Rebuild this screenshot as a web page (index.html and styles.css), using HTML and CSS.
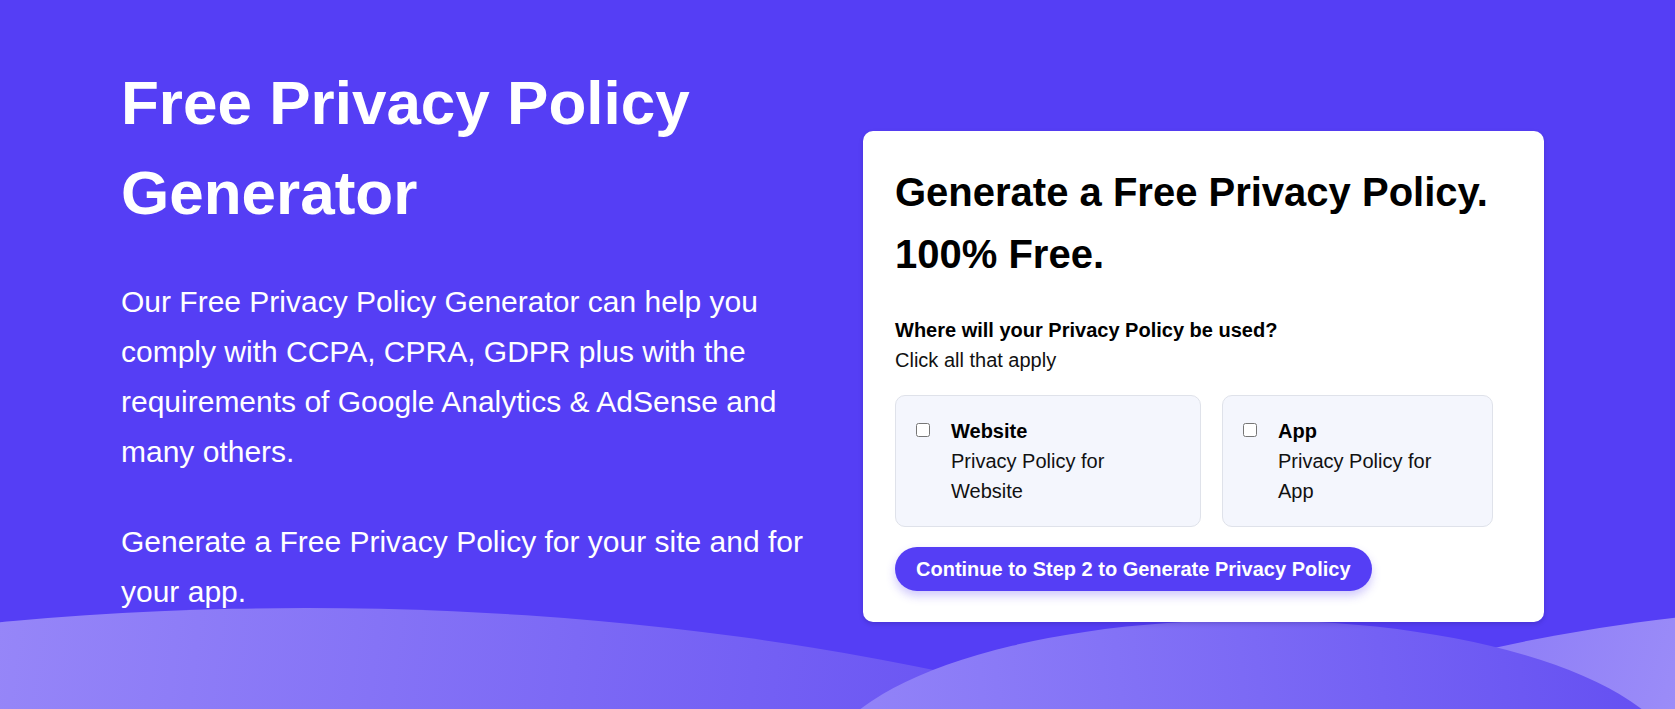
FILE: index.html
```html
<!DOCTYPE html>
<html lang="en">
<head>
<meta charset="utf-8">
<title>Free Privacy Policy Generator</title>
<link rel="stylesheet" href="styles.css">
</head>
<body>
<section class="hero">
  <svg class="waves" viewBox="0 0 1675 709" preserveAspectRatio="none" aria-hidden="true">
    <defs>
      <linearGradient id="gLeft" gradientUnits="userSpaceOnUse" x1="0" y1="600" x2="950" y2="709">
        <stop offset="0" stop-color="#9686f8"/>
        <stop offset="1" stop-color="#6b56f3"/>
      </linearGradient>
      <linearGradient id="gMid" gradientUnits="userSpaceOnUse" x1="860" y1="709" x2="1640" y2="640">
        <stop offset="0" stop-color="#9283f8"/>
        <stop offset="1" stop-color="#6550f2"/>
      </linearGradient>
      <linearGradient id="gRight" gradientUnits="userSpaceOnUse" x1="1490" y1="650" x2="1675" y2="709">
        <stop offset="0" stop-color="#8e7ef7"/>
        <stop offset="1" stop-color="#9b8cf8"/>
      </linearGradient>
    </defs>
    <ellipse cx="306" cy="1283" rx="1500" ry="675" fill="url(#gLeft)"/>
    <ellipse cx="1900" cy="1005" rx="900" ry="400" fill="url(#gRight)"/>
    <ellipse cx="1251" cy="773" rx="430" ry="153" fill="url(#gMid)"/>
  </svg>
  <div class="hero-inner">
    <div class="intro">
      <h1 class="intro-title">Free Privacy Policy Generator</h1>
      <p class="intro-text">Our Free Privacy Policy Generator can help you comply with CCPA, CPRA, GDPR plus with the requirements of Google Analytics &amp; AdSense and many others.</p>
      <p class="intro-text">Generate a Free Privacy Policy for your site and for your app.</p>
    </div>
    <div class="card">
      <h2 class="card-title">Generate a Free Privacy Policy. 100% Free.</h2>
      <p class="question">Where will your Privacy Policy be used?</p>
      <p class="hint">Click all that apply</p>
      <div class="options">
        <label class="option">
          <input class="option-check" type="checkbox">
          <span class="option-text">
            <strong class="option-name">Website</strong>
            <span class="option-desc">Privacy Policy for Website</span>
          </span>
        </label>
        <label class="option">
          <input class="option-check" type="checkbox">
          <span class="option-text">
            <strong class="option-name">App</strong>
            <span class="option-desc">Privacy Policy for App</span>
          </span>
        </label>
      </div>
      <button class="cta" type="button">Continue to Step 2 to Generate Privacy Policy</button>
    </div>
  </div>
</section>
</body>
</html>
```

FILE: styles.css
```css
* {
  box-sizing: border-box;
}

html, body {
  margin: 0;
  padding: 0;
}

body {
  font-family: "Liberation Sans", Arial, sans-serif;
  background: #553ef5;
}

.hero {
  position: relative;
  height: 709px;
  overflow: hidden;
  background: #553ef5;
}

.waves {
  position: absolute;
  left: 0;
  top: 0;
  width: 100%;
  height: 100%;
  z-index: 0;
}

.hero-inner {
  position: relative;
  z-index: 1;
  display: flex;
  align-items: flex-start;
  gap: 42px;
  padding: 58px 0 0 121px;
}

.intro {
  width: 700px;
  flex: none;
  color: #ffffff;
}

.intro-title {
  margin: 0;
  font-size: 62px;
  line-height: 90px;
  font-weight: 700;
}

.intro-text {
  margin: 39px 0 0;
  font-size: 30px;
  line-height: 50px;
}

.intro-text + .intro-text {
  margin-top: 40px;
}

.card {
  flex: none;
  width: 681px;
  margin-top: 73px;
  padding: 30px 32px 31px;
  background: #ffffff;
  border-radius: 10px;
  box-shadow: 0 2px 4px rgba(30, 20, 120, 0.25);
  color: #000000;
}

.card-title {
  margin: 0;
  font-size: 40px;
  line-height: 62px;
  font-weight: 700;
}

.question {
  margin: 30px 0 0;
  font-size: 20px;
  line-height: 30px;
  font-weight: 700;
}

.hint {
  margin: 0;
  font-size: 20px;
  line-height: 30px;
  color: #111111;
}

.options {
  display: grid;
  grid-template-columns: 306px 271px;
  gap: 21px;
  margin-top: 20px;
}

.option {
  display: flex;
  align-items: flex-start;
  gap: 21px;
  padding: 20px;
  background: #f4f6fd;
  border: 1px solid #dfe2ea;
  border-radius: 10px;
  cursor: pointer;
}

.option-check {
  flex: none;
  width: 14px;
  height: 14px;
  margin: 7px 0 0;
}

.option-text {
  display: flex;
  flex-direction: column;
  font-size: 20px;
  line-height: 30px;
}

.option-name {
  font-weight: 700;
}

.option-desc {
  max-width: 180px;
  color: #111111;
}

.cta {
  display: inline-block;
  margin-top: 20px;
  padding: 7px 21px;
  border: none;
  border-radius: 999px;
  background: #553ef5;
  color: #ffffff;
  font-family: "Liberation Sans", Arial, sans-serif;
  font-size: 20px;
  line-height: 30px;
  font-weight: 700;
  box-shadow: 0 5px 10px rgba(85, 62, 245, 0.28);
  cursor: pointer;
}
```
